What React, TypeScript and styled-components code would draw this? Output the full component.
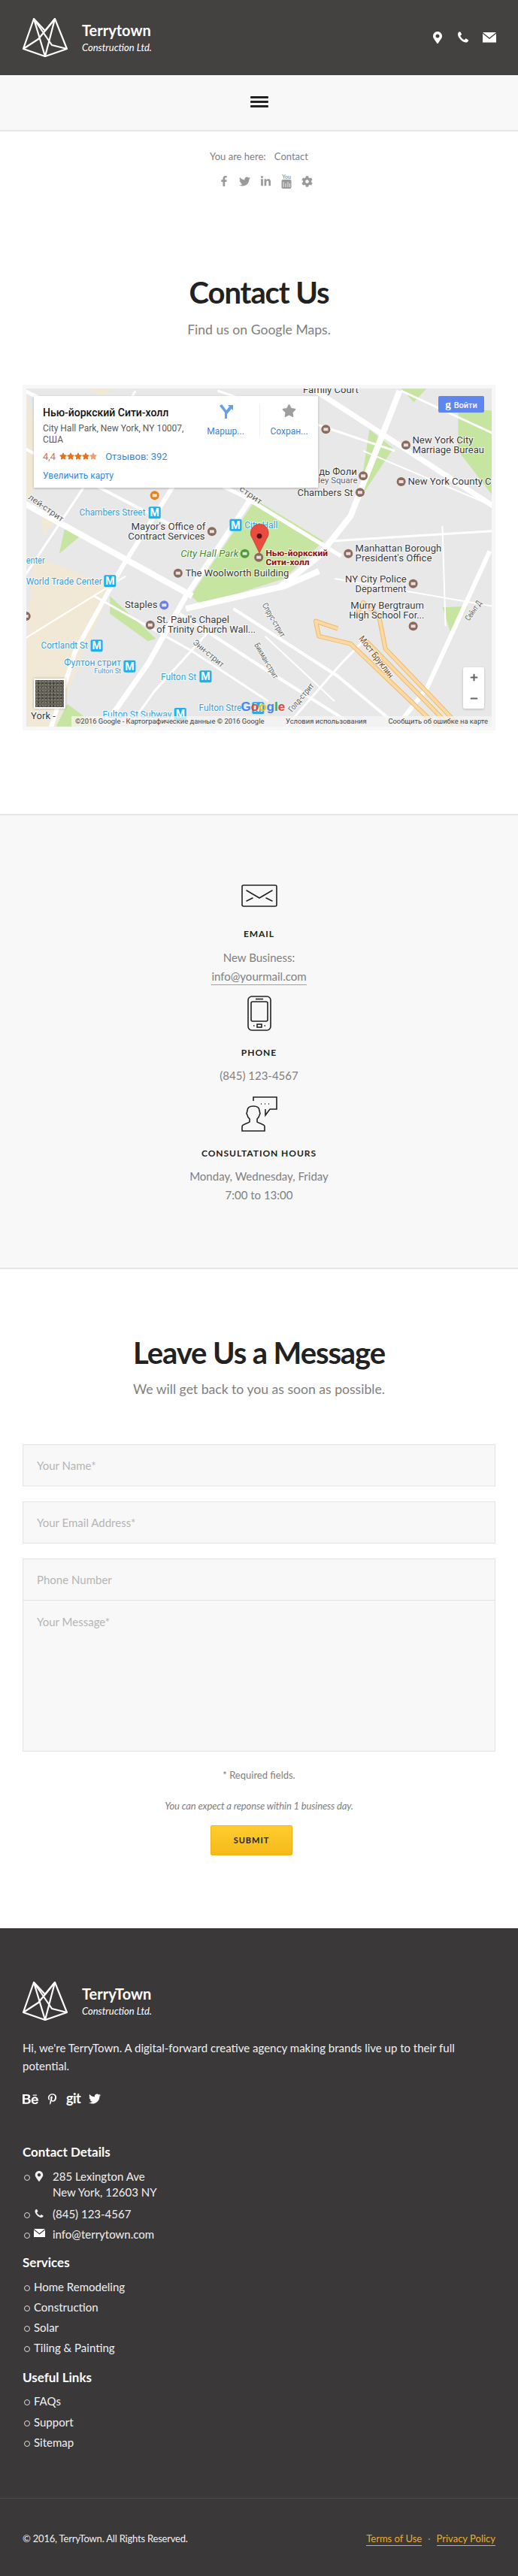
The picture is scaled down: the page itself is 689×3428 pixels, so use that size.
import React from "react";
import styled, { createGlobalStyle } from "styled-components";
import { FaFacebookF, FaTwitter, FaLinkedinIn, FaCog, FaBehance, FaPinterestP, FaMapMarkerAlt, FaStar, FaPlus, FaMinus } from "react-icons/fa";

const Global = createGlobalStyle`
  html, body { margin: 0; padding: 0; background: #fff; }
  body { font-family: Lato, "Liberation Sans", sans-serif; color: #808080; font-size: 16px; }
  * { box-sizing: border-box; }
`;

const Page = styled.div`width: 689px; height: 3428px; overflow: hidden;`;
const TopBar = styled.header`height: 100px; background: #444240; display: flex; align-items: center; justify-content: space-between; padding: 0 29px 0 30px;`;
const Brand = styled.div`display: flex; align-items: center; gap: 19px;`;
const BrandText = styled.div`display: flex; flex-direction: column; color: #fff;`;
const BrandName = styled.div`font-size: 20px; line-height: 24px; font-weight: 700;`;
const BrandSub = styled.div`font-size: 13px; line-height: 20px; font-style: italic; margin-top: 1px;`;
const TopIcons = styled.div`display: flex; align-items: center; gap: 17px; color: #fff;`;
const NavBar = styled.nav`height: 75px; background: #f8f8f8; border-bottom: 2px solid #e6e6e6; display: flex; align-items: center; justify-content: center;`;
const Burger = styled.div`width: 24px; display: flex; flex-direction: column; gap: 3px; margin-top: -2px; i { display: block; height: 3px; background: #222; border-radius: 1px; }`;
const Crumb = styled.div`margin-top: 23px; text-align: center; font-size: 13px; line-height: 20px; color: #808080; span { margin-left: 8px; }`;
const SocialRow = styled.div`display: flex; justify-content: center; align-items: center; gap: 13px; margin-top: 13px; padding-left: 18px; height: 20px; color: #9a9a9a; font-size: 16px;`;
const Heading = styled.h1`margin: 0; text-align: center; color: #222; font-size: 40px; font-weight: 700; line-height: 50px; letter-spacing: -1.1px;`;
const Sub = styled.p`margin: 0; text-align: center; color: #808080; font-size: 17.6px; line-height: 28px;`;
const ContactIntro = styled.section`margin-top: 113px; ${Sub} { margin-top: 11px; }`;
const MapFrame = styled.div`position: relative; margin: 59px 30px 0 30px; height: 460px; border: 5px solid #f7f7f7; background: #e8e8e8; overflow: hidden;`;
const MapArt = styled.svg`display: block;`;
const InfoCard = styled.div`position: absolute; left: 10px; top: 10px; width: 378px; height: 122px; background: #fff; box-shadow: 0 1px 3px rgba(0,0,0,.25); font-family: Roboto, sans-serif; font-size: 12px; color: #5b5b5b; padding: 13px 12px;`;
const CardTitle = styled.div`font-size: 14px; line-height: 18px; font-weight: 500; color: #111;`;
const CardAddress = styled.div`margin-top: 5px; width: 200px; line-height: 15px;`;
const CardRating = styled.div`display: flex; align-items: center; margin-top: 5px; height: 18px; color: #e7711b; font-size: 13px; gap: 2px;`;
const CardStars = styled.span`display: flex; margin-left: 3px; font-size: 10px; margin-right: 9px;`;
const BlueLink = styled.span`color: #3a84df;`;
const CardMore = styled.div`margin-top: 10px; color: #3a84df;`;
const CardActions = styled.div`position: absolute; top: 10px; right: 0; display: flex; height: 44px; color: #3a84df;`;
const CardAction = styled.div`width: 90px; height: 44px; display: flex; flex-direction: column; align-items: center; justify-content: space-between; & + & { border-left: 1px solid #eee; width: 78px; }`;
const Login = styled.div`position: absolute; right: 10px; top: 10px; width: 61px; height: 22px; background: #5f85ee; color: #fff; border-radius: 2px; font: 500 11px/22px Roboto, sans-serif; text-align: center;`;
const LoginMark = styled.span`font: 700 15px/22px "Liberation Serif", serif; margin-right: 4px;`;
const Zoom = styled.div`position: absolute; right: 10px; top: 371px; width: 28px; height: 55px; background: #fff; box-shadow: 0 1px 3px rgba(0,0,0,.2); color: #666; display: flex; flex-direction: column; align-items: center; justify-content: space-around; font-size: 11px; border-radius: 2px;`;
const Sat = styled.div`position: absolute; left: 10px; top: 386px; width: 42px; height: 40px; border: 2px solid #fff; box-shadow: 0 0 3px rgba(0,0,0,.3); background: radial-gradient(#7d7c6a 1px, transparent 1.5px) 0 0/4px 4px, radial-gradient(#3f3e36 1px, transparent 1.5px) 2px 2px/5px 5px, #64625a;`;
const Attribution = styled.div`position: absolute; right: 0; bottom: 0; left: 60px; height: 14px; background: rgba(245,245,245,.75); font: 9.4px/14px Roboto, sans-serif; color: #444; white-space: nowrap; display: flex; justify-content: space-between; padding: 0 5px;`;

const ContactBand = styled.section`margin-top: 111px; height: 606px; background: #f8f8f8; border-top: 2px solid #e6e6e6; border-bottom: 2px solid #e6e6e6; padding-top: 92px; display: flex; flex-direction: column; align-items: center;`;
const IconSlot = styled.div<{ $top?: number }>`line-height: 0; margin-top: ${p => p.$top ?? 0}px;`;
const ItemLabel = styled.h4<{ $top?: number }>`margin: ${p => p.$top ?? 20}px 0 0; color: #222; font-size: 12px; line-height: 18px; letter-spacing: .95px; font-weight: 700; text-transform: uppercase;`;
const ItemText = styled.div`margin-top: 9.5px; font-size: 15px; line-height: 25px; text-align: center; color: #808080;`;
const MailLink = styled.span`border-bottom: 1px solid #a0a0a0; display: inline-block; line-height: 22px;`;

const MessageSection = styled.section`padding: 86px 30px 97px; ${Sub} { margin-top: 10px; }`;
const FormFields = styled.form`margin-top: 59px; display: flex; flex-direction: column;`;
const Field = styled.div<{ $gap?: number }>`height: 56px; margin-top: ${p => p.$gap ?? 0}px; background: #f8f8f8; border: 1px solid #e3e3e3; color: #b5b5b5; font-size: 15px; line-height: 54px; padding: 0 18px;`;
const TextArea = styled.div`height: 202px; margin-top: -1px; background: #f8f8f8; border: 1px solid #e3e3e3; color: #b5b5b5; font-size: 15px; line-height: 20px; padding: 18px 18px;`;
const Required = styled.div`margin-top: 21px; text-align: center; font-size: 13px; line-height: 20px;`;
const Expect = styled.div`margin-top: 21px; text-align: center; font-size: 13px; line-height: 20px; font-style: italic; letter-spacing: -.15px;`;
const Submit = styled.button`display: block; margin: 16px 0 0 250px; width: 109px; height: 40px; border: 1px solid #eeb314; border-radius: 2px; background: linear-gradient(#ffcd2e, #f4ba18); color: #222; font: 700 11px/38px Lato, sans-serif; letter-spacing: 1px; padding: 0;`;

const Footer = styled.footer`background: #3a3839; color: #fff; height: 862px;`;
const FooterMain = styled.div`padding: 71px 30px 0; height: 759px; border-bottom: 1px solid #4d4b4c;`;
const Bio = styled.p`margin: 24px 0 0; font-size: 15px; line-height: 24px; color: #f0f0f0;`;
const FootSocial = styled.div`display: flex; align-items: center; gap: 11px; margin-top: 22px; height: 20px; font-size: 16px;`;
const GitMark = styled.span`font: 700 18px/18px Lato, sans-serif; letter-spacing: -.5px; margin-top: -3px;`;
const FootTitle = styled.h5<{ $top: number }>`margin: ${p => p.$top}px 0 0; font-size: 17px; line-height: 22px; font-weight: 700; color: #fff;`;
const FootList = styled.ul`list-style: none; margin: 10.500px 0 0; padding: 0;`;
const FootItem = styled.li<{ $h?: number }>`position: relative; padding-left: 15px; min-height: ${p => p.$h ?? 27.3}px; line-height: 21px; font-size: 15px; color: #f0f0f0; display: flex; &::before { content: ""; position: absolute; left: 2px; top: 8px; width: 6px; height: 6px; border: 1px solid #ddd; border-radius: 50%; }`;
const ItemIcon = styled.span`width: 25px; flex: none; padding-top: 3px; line-height: 0;`;
const FootBottom = styled.div`display: flex; justify-content: space-between; padding: 43px 30px 0; font-size: 13px; line-height: 20px; color: #f0f0f0;`;
const Copyright = styled.span`letter-spacing: -.2px;`;
const Legal = styled.div`display: flex; gap: 8px; color: #888; `;
const LegalLink = styled.span`color: #e9ae2c; border-bottom: 1px solid #e9ae2c; height: 20px;`;

const Logo = () => (
  <svg width="60" height="52" viewBox="0 0 60 52" fill="none" stroke="#fff" strokeWidth="2.2" strokeLinejoin="round">
    <path d="M15 1 L1 41 L30 51 L59 41 L43 1 L30 17 Z" />
    <path d="M15 1 L39 36 L59 41 M43 1 L21 28 L1 41 M15 1 L30 51 L43 1" />
  </svg>
);
const Mail = ({ s = 18, c = "#fff" }: { s?: number; c?: string }) => (
  <svg width={s} height={s * .75} viewBox="0 0 20 15"><path fill={c} d="M0 0h20L10 8zM0 2l10 8 10-8v13H0z" /></svg>
);
const Phone = ({ s = 16 }: { s?: number }) => (
  <svg width={s} height={s} viewBox="0 0 1792 1792" fill="currentColor">
    <path d="M1600 1240q0 27-10 70.5t-21 68.5q-21 50-122 106-94 51-186 51-27 0-53-3.500t-57.500-12.500-47-14.500-55.500-20.500-49-18q-98-35-175-83-127-79-264-216t-216-264q-48-77-83-175-3-9-18-49t-20.500-55.500-14.500-47-12.500-57.500-3.500-53q0-92 51-186 56-101 106-122 25-11 68.500-21t70.500-10q14 0 21 3 18 6 53 76 11 19 30 54t35 63.500 31 53.500q3 4 17.500 25t21.500 35.500 7 28.500q0 20-28.500 50t-62 55-62 53-28.500 46q0 9 5 22.500t8.500 20.500 14 24 11.500 19q76 137 174 235t235 174q2 1 19 11.500t24 14 20.500 8.500 22.500 5q18 0 46-28.500t53-62 55-62 50-28.500q14 0 28.500 7t35.500 21.500 25 17.500q25 15 53.500 31t63.500 35 54 30q70 35 76 53 3 7 3 21z" />
  </svg>
);
const YouTube = () => (
  <svg width="14" height="20" viewBox="0 0 14 20" fill="#9a9a9a">
    <text x="7" y="6.500" fontSize="7" fontFamily="Lato" fontWeight="700" textAnchor="middle">You</text>
    <rect x="0.5" y="8" width="13" height="12" rx="2" />
    <path d="M3 11v7M6 13v5M9 11v7M11.5 13v5" stroke="#fff" strokeWidth=".8" />
  </svg>
);

const X = (v: number) => +(v * 0.421 - 15).toFixed(1);
const Y = (v: number) => +(v / 3 - 17).toFixed(1);
const pts = (a: number[]) => { let s = ""; for (let i = 0; i < a.length; i += 2) s += `${X(a[i])},${Y(a[i + 1])} `; return s.trim(); };

const roads: [number[], number][] = [
  [[30, 60, 720, 480, 1030, 720], 5], [[30, 290, 560, 640], 4], [[30, 510, 560, 880], 8], [[950, 60, 1510, 520], 7], [[640, 60, 1200, 300], 3],
  [[1215, 60, 1060, 560, 960, 720, 840, 840], 8], [[1500, 700, 1300, 1250, 1200, 1410], 6], [[740, 500, 540, 880, 420, 1150, 270, 1420], 7],
  [[500, 440, 340, 760, 190, 1100, 110, 1420], 6], [[380, 60, 220, 440, 30, 800], 3], [[540, 930, 850, 840, 960, 780], 8],
  [[520, 950, 800, 1180, 1100, 1420], 4], [[250, 880, 560, 1100, 800, 1300], 3], [[1220, 60, 1510, 230], 3], [[350, 800, 30, 1050], 2],
  [[690, 930, 1020, 1200, 1230, 1420], 4], [[790, 1040, 1010, 1300], 2], [[850, 1410, 1030, 1150, 1100, 1060], 3], [[620, 1010, 440, 1260, 350, 1420], 3],
  [[1000, 660, 1510, 620], 3], [[1010, 810, 1510, 920], 2], [[1350, 600, 1360, 1000], 2], [[1100, 300, 1510, 520], 2],
];
const parks: number[][] = [
  [760, 495, 975, 660, 850, 810, 590, 915, 555, 880, 650, 700],
  [1120, 215, 1195, 290, 1090, 490, 1095, 420],
  [1400, 130, 1510, 140, 1510, 480, 1400, 300],
  [300, 880, 445, 1050, 420, 1060, 300, 950],
  [160, 590, 215, 630, 140, 710],
  [1350, 925, 1430, 920, 1380, 1040],
  [1220, 52, 1300, 52, 1260, 105],
  [130, 1400, 165, 1310, 260, 1400],
];
const blocks: number[][] = [
  [35, 50, 60, 200, 60, 450, 36, 500],
  [60, 720, 140, 760, 310, 840, 200, 1150, 130, 1400, 40, 1400, 35, 1100],
  [80, 530, 140, 570, 90, 640],
  [230, 52, 310, 52, 280, 80],
];
type Label = [string, number, number, number, number, string, number?];
const navy = "#3d3d3d", teal = "#3aa0d8";
const labels: Label[] = [
  ["Family Court", 910, 1085, 70, 12, navy],
  ["New York City", 1255, 1448, 270, 12.5, navy], ["Marriage Bureau", 1255, 1482, 308, 12.5, navy],
  ["New York County C", 1241, 1505, 435, 12.5, navy],
  ["дь Фоли", 960, 1080, 395, 12.5, navy], ["ley Square", 958, 1082, 430, 11, "#666"], ["Chambers St", 892, 1068, 480, 12.5, navy],
  ["Chambers Street", 203, 412, 558, 12.5, teal], ["City Hall", 725, 830, 608, 12, teal],
  ["Mayor's Office of", 367, 602, 615, 12.5, navy], ["Contract Services", 357, 600, 653, 12.5, navy],
  ["City Hall Park", 523, 706, 722, 12.5, "#4f8c2c"], ["Нью-йоркский", 792, 988, 720, 11.5, "#8e1010"], ["Сити-холл", 792, 930, 755, 11.5, "#8e1010"],
  ["Manhattan Borough", 1075, 1347, 702, 12.5, navy], ["President's Office", 1075, 1317, 741, 12.5, navy],
  ["enter", 35, 94, 750, 12.5, teal], ["The Woolworth Building", 538, 865, 800, 12.5, navy], ["World Trade Center", 35, 275, 833, 12.5, teal],
  ["NY City Police", 1043, 1237, 825, 12.5, navy], ["Department", 1075, 1236, 864, 12.5, navy],
  ["Murry Bergtraum", 1060, 1292, 930, 12.5, navy], ["High School For...", 1055, 1293, 968, 12.5, navy],
  ["Staples", 347, 450, 927, 12.5, navy], ["St. Paul's Chapel", 447, 677, 987, 12.5, navy], ["of Trinity Church Wall...", 447, 760, 1026, 12.5, navy],
  ["Cortlandt St", 82, 230, 1089, 12.5, teal], ["Фултон стрит", 155, 335, 1157, 12.5, teal], ["Fulton St", 250, 335, 1188, 9.5, teal],
  ["Fulton St", 461, 573, 1215, 12.5, teal], ["Fulton Stre", 581, 716, 1338, 12.5, teal], ["Fulton St Subway", 277, 495, 1364, 12.5, teal],
  ["York -", 50, 128, 1372, 12.5, navy],
  ["Спрус-стрит", 780, 900, 915, 11, "#666", 60], ["Бикман-стрит", 755, 880, 1075, 11, "#666", 60], ["Энн-стрит", 560, 680, 1068, 11, "#666", 40],
  ["Голд-стрит", 875, 985, 1345, 11, "#666", -50], ["Сейнт Д", 1435, 1505, 980, 11, "#666", -55], ["Мост Бруклин", 1085, 1245, 1050, 12, "#7c4a0a", 52],
  ["лей-стрит", 40, 170, 490, 11, "#666", 35], ["-стрит", 700, 790, 450, 11, "#666", 35],
];
const pois: [number, number, string][] = [
  [982, 214, "#8b6a5e"], [1235, 277, "#8b6a5e"], [1100, 400, "#8b6a5e"], [1220, 423, "#8b6a5e"], [1090, 466, "#8b6a5e"], [622, 622, "#8b6a5e"],
  [1053, 710, "#8b6a5e"], [770, 725, "#8b6a5e"], [515, 788, "#8b6a5e"], [1258, 830, "#8b6a5e"], [427, 995, "#8b6a5e"], [1258, 1000, "#8b6a5e"],
  [441, 478, "#e8801f"], [726, 710, "#4f9a3a"], [471, 916, "#6d7fe0"], [35, 960, "#8b6a5e"],
];
const metros: [number, number][] = [[441, 547], [697, 596], [300, 820], [258, 1078], [362, 1160], [602, 1201], [768, 1327], [522, 1350]];

const MapDrawing = () => (
  <MapArt width="620" height="450" viewBox="0 0 620 450">
    <rect width="620" height="450" fill="#e8e8e8" />
    {blocks.map((b, i) => <polygon key={i} points={pts(b)} fill="#f2e8d6" />)}
    {parks.map((p, i) => <polygon key={i} points={pts(p)} fill="#c5e5a0" />)}
    {roads.map(([r, w], i) => <polyline key={i} points={pts(r)} fill="none" stroke="#fff" strokeWidth={w} strokeLinejoin="round" />)}
    {[[1020, 1010, 950, 980, 960, 1040, 1060, 1070, 1350, 1420], [1075, 960, 1100, 905, 1150, 960, 1170, 1090, 1420, 1420], [1110, 1060, 1390, 1420]].map((r, i) => (
      <g key={i}>
        <polyline points={pts(r)} fill="none" stroke="#f0b968" strokeWidth="6" strokeLinejoin="round" />
        <polyline points={pts(r)} fill="none" stroke="#fbd9a5" strokeWidth="4" strokeLinejoin="round" />
      </g>
    ))}
    {pois.map(([x, y, c], i) => (
      <g key={i}>
        <circle cx={X(x)} cy={Y(y)} r="6" fill={c} />
        <rect x={X(x) - 3} y={Y(y) - 2} width="6" height="4" fill="#fff" opacity=".8" />
      </g>
    ))}
    {metros.map(([x, y], i) => (
      <g key={i}>
        <rect x={X(x) - 8} y={Y(y) - 8} width="16" height="16" rx="2" fill="#1cb0f0" />
        <text x={X(x)} y={Y(y) + 5} fontSize="14" fontWeight="700" fontFamily="Roboto" textAnchor="middle" fill="#fff">M</text>
      </g>
    ))}
    {labels.map(([t, x0, x1, y, s, c, r], i) => (
      <text key={i} x={X(x0)} y={Y(y)} fontSize={s} fontFamily="Roboto" fill={c} textLength={X(x1) - X(x0)} lengthAdjust="spacingAndGlyphs"
        transform={r ? `rotate(${r} ${X(x0)} ${Y(y)})` : undefined} fontStyle={t === "City Hall Park" ? "italic" : undefined}
        fontWeight={c === "#8e1010" ? 700 : 400} stroke="#fff" strokeOpacity=".7" strokeWidth="2" paintOrder="stroke">{t}</text>
    ))}
    <text x={X(714)} y={Y(1338)} fontSize="17" fontWeight="700" fontFamily="Liberation Sans">
      <tspan fill="#4285f4">G</tspan><tspan fill="#ea4335">o</tspan><tspan fill="#fbbc05">o</tspan><tspan fill="#4285f4">g</tspan><tspan fill="#34a853">l</tspan><tspan fill="#ea4335">e</tspan>
    </text>
    <path d={`M${X(772)} ${Y(708)} L${X(750)} ${Y(650)} A12 12 0 1 1 ${X(795)} ${Y(650)} Z`} fill="#ea4c3f" stroke="#b8352b" strokeWidth=".6" />
    <circle cx={X(772)} cy={Y(640)} r="3.4" fill="#5a1410" />
  </MapArt>
);

export default function App() {
  return (
    <Page>
      <Global />
      <TopBar>
        <Brand>
          <Logo />
          <BrandText><BrandName>Terrytown</BrandName><BrandSub>Construction Ltd.</BrandSub></BrandText>
        </Brand>
        <TopIcons>
          <FaMapMarkerAlt size={16} /><Phone s={18} /><Mail />
        </TopIcons>
      </TopBar>
      <NavBar><Burger><i /><i /><i /></Burger></NavBar>
      <Crumb>You are here: <span>Contact</span></Crumb>
      <SocialRow><FaFacebookF size={14} /><FaTwitter size={15} /><FaLinkedinIn size={15} /><YouTube /><FaCog size={15} /></SocialRow>
      <ContactIntro>
        <Heading>Contact Us</Heading>
        <Sub>Find us on Google Maps.</Sub>
      </ContactIntro>
      <MapFrame>
        <MapDrawing />
        <InfoCard>
          <CardTitle>Нью-йоркский Сити-холл</CardTitle>
          <CardAddress>City Hall Park, New York, NY 10007, США</CardAddress>
          <CardRating>4,4<CardStars><FaStar /><FaStar /><FaStar /><FaStar /><FaStar color="#e7a07a" /></CardStars><BlueLink>Отзывов: 392</BlueLink></CardRating>
          <CardMore>Увеличить карту</CardMore>
          <CardActions>
            <CardAction>
              <svg width="20" height="20" viewBox="0 0 20 20"><path d="M9 20V12L2 3l3-2 6 8 4-5-2-2h7v7l-2-2-6 7v6z" fill="#4a90e2" opacity=".85" /></svg>
              Маршр...
            </CardAction>
            <CardAction>
              <FaStar size={19} color="#9e9e9e" />
              Сохран...
            </CardAction>
          </CardActions>
        </InfoCard>
        <Login><LoginMark>g</LoginMark>Войти</Login>
        <Zoom><FaPlus /><FaMinus /></Zoom>
        <Sat />
        <Attribution>
          <span>©2016 Google - Картографические данные © 2016 Google</span>
          <span>Условия использования</span>
          <span>Сообщить об ошибке на карте</span>
        </Attribution>
      </MapFrame>
      <ContactBand>
        <IconSlot>
          <svg width="48" height="30" viewBox="0 0 48 30" fill="none" stroke="#222" strokeWidth="1.6" strokeLinecap="round"><rect x="1" y="1" width="46" height="28" rx="2" /><path d="M7 8l17 10L41 8M7 22l8-4M41 22l-8-4" /></svg>
        </IconSlot>
        <ItemLabel $top={27}>Email</ItemLabel>
        <ItemText>New Business:<br /><MailLink>info@yourmail.com</MailLink></ItemText>
        <IconSlot $top={13}>
          <svg width="32" height="47" viewBox="0 0 32 47" fill="none" stroke="#222" strokeWidth="1.6"><rect x="1" y="1" width="30" height="45" rx="5" /><rect x="5" y="8" width="22" height="26" rx="2" /><path d="M11 4.5h10" /><rect x="13" y="38" width="6" height="4" /><path d="M8 40h1.5M22.500 40h1.500" /></svg>
        </IconSlot>
        <ItemLabel>Phone</ItemLabel>
        <ItemText>(845) 123-4567</ItemText>
        <IconSlot $top={14.5}>
          <svg width="48" height="47" viewBox="0 0 48 47" fill="none" stroke="#222" strokeWidth="1.6"><path d="M16 6V1h31v16h-9l-6 8v-8" /><path d="M26 10h1M31 10h1M36 10h1" /><path d="M1 46v-6c0-3 8-4 10-6v-4c-2-2-3-3-3-5l-1-2 1-4c0-4 3-6 8-6s8 2 8 6l1 4-1 2c0 2-1 3-3 5v4c2 2 10 3 10 6v6z" /></svg>
        </IconSlot>
        <ItemLabel>Consultation Hours</ItemLabel>
        <ItemText>Monday, Wednesday, Friday<br />7:00 to 13:00</ItemText>
      </ContactBand>
      <MessageSection>
        <Heading>Leave Us a Message</Heading>
        <Sub>We will get back to you as soon as possible.</Sub>
        <FormFields>
          <Field>Your Name*</Field>
          <Field $gap={20}>Your Email Address*</Field>
          <Field $gap={20}>Phone Number</Field>
          <TextArea>Your Message*</TextArea>
        </FormFields>
        <Required>* Required fields.</Required>
        <Expect>You can expect a reponse within 1 business day.</Expect>
        <Submit type="button">SUBMIT</Submit>
      </MessageSection>
      <Footer>
        <FooterMain>
          <Brand>
            <Logo />
            <BrandText><BrandName>TerryTown</BrandName><BrandSub>Construction Ltd.</BrandSub></BrandText>
          </Brand>
          <Bio>Hi, we're TerryTown. A digital-forward creative agency making brands live up to their full potential.</Bio>
          <FootSocial><FaBehance size={21} /><FaPinterestP size={15} /><GitMark>git</GitMark><FaTwitter size={16} /></FootSocial>
          <FootTitle $top={50}>Contact Details</FootTitle>
          <FootList>
            <FootItem $h={50}><ItemIcon><FaMapMarkerAlt size={14} /></ItemIcon><span>285 Lexington Ave<br />New York, 12603 NY</span></FootItem>
            <FootItem><ItemIcon><Phone s={14} /></ItemIcon><span>(845) 123-4567</span></FootItem>
            <FootItem><ItemIcon><Mail s={15} /></ItemIcon><span>info@terrytown.com</span></FootItem>
          </FootList>
          <FootTitle $top={10}>Services</FootTitle>
          <FootList>
            <FootItem>Home Remodeling</FootItem><FootItem>Construction</FootItem><FootItem>Solar</FootItem><FootItem>Tiling &amp; Painting</FootItem>
          </FootList>
          <FootTitle $top={11}>Useful Links</FootTitle>
          <FootList>
            <FootItem>FAQs</FootItem><FootItem>Support</FootItem><FootItem>Sitemap</FootItem>
          </FootList>
        </FooterMain>
        <FootBottom>
          <Copyright>© 2016, TerryTown. All Rights Reserved.</Copyright>
          <Legal><LegalLink>Terms of Use</LegalLink>·<LegalLink>Privacy Policy</LegalLink></Legal>
        </FootBottom>
      </Footer>
    </Page>
  );
}
